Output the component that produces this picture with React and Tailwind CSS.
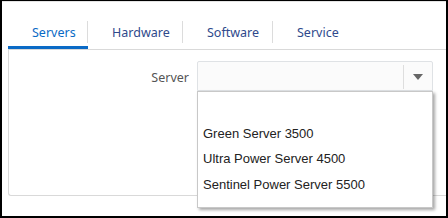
import { useState } from "react";

const tabs = [
  { label: "Servers", width: "w-[80px]" },
  { label: "Hardware", width: "w-[95px]" },
  { label: "Software", width: "w-[90px]" },
  { label: "Service", width: "w-[90px]" },
];

const options = ["", "Green Server 3500", "Ultra Power Server 4500", "Sentinel Power Server 5500"];

function App() {
  const [active, setActive] = useState(0);
  const [open, setOpen] = useState(true);

  return (
    <div className="w-[448px] h-[218px] overflow-hidden bg-white border-x-2 border-b-2 border-t border-black font-['Noto_Sans',sans-serif]">
      <div className="h-full border-t border-[#e4e4e4] pt-[14px] pl-[6px]">
        {/* TABS */}
        <div className="flex h-[33px]">
          {tabs.map((tab, i) => (
            <button
              key={tab.label}
              onClick={() => setActive(i)}
              className={`${tab.width} flex items-center h-[33px] pl-6 text-left text-[12.5px] border-b-[3px] ${
                active === i ? "border-[#0a6ac6] text-[#0a6ac6]" : "border-transparent text-[#2f4a8c]"
              }`}
            >
              <span className="flex-1 pt-[5px]">{tab.label}</span>
              {i < tabs.length - 1 && <span className="w-px h-[22px] mt-[2px] bg-[#dcdcdc]" />}
            </button>
          ))}
        </div>

        {/* PANEL */}
        <div className="h-[147px] border border-r-0 border-[#d9d9d9] rounded-bl-[3px] pt-[11px]">
          <div className="flex items-start">
            <label className="w-[180px] h-[30px] pt-[5px] flex items-center justify-end text-[12.5px] text-[#555]">
              Server
            </label>
            <div className="relative ml-2 w-[236px]">
              <div
                onClick={() => setOpen(!open)}
                className="h-[30px] flex bg-[#fbfbfb] border border-[#dfe2e5] rounded-t-[2px]"
              >
                <div className="flex-1" />
                <div className="w-[29px] flex items-center justify-center relative">
                  <span className="absolute left-0 top-[3px] bottom-[1px] w-px bg-[#dedede]" />
                  <svg width="10" height="6" viewBox="0 0 10 6" className="mt-[2px]">
                    <path d="M0 0 L10 0 L5 6 Z" fill="#666" />
                  </svg>
                </div>
              </div>

              {open && (
                <div className="absolute left-0 top-full w-[236px] h-[117px] bg-white border border-[#c8c8c8] shadow-[2px_2px_3px_rgba(0,0,0,0.35)] pt-[3px] font-['Liberation_Sans',Arial,sans-serif]">
                  {options.map((opt, i) => (
                    <div
                      key={i}
                      className="h-[25.5px] flex items-center px-[5px] text-[13px] text-[#222]"
                    >
                      {opt}
                    </div>
                  ))}
                </div>
              )}
            </div>
          </div>
        </div>
      </div>
    </div>
  );
}

export default App;
